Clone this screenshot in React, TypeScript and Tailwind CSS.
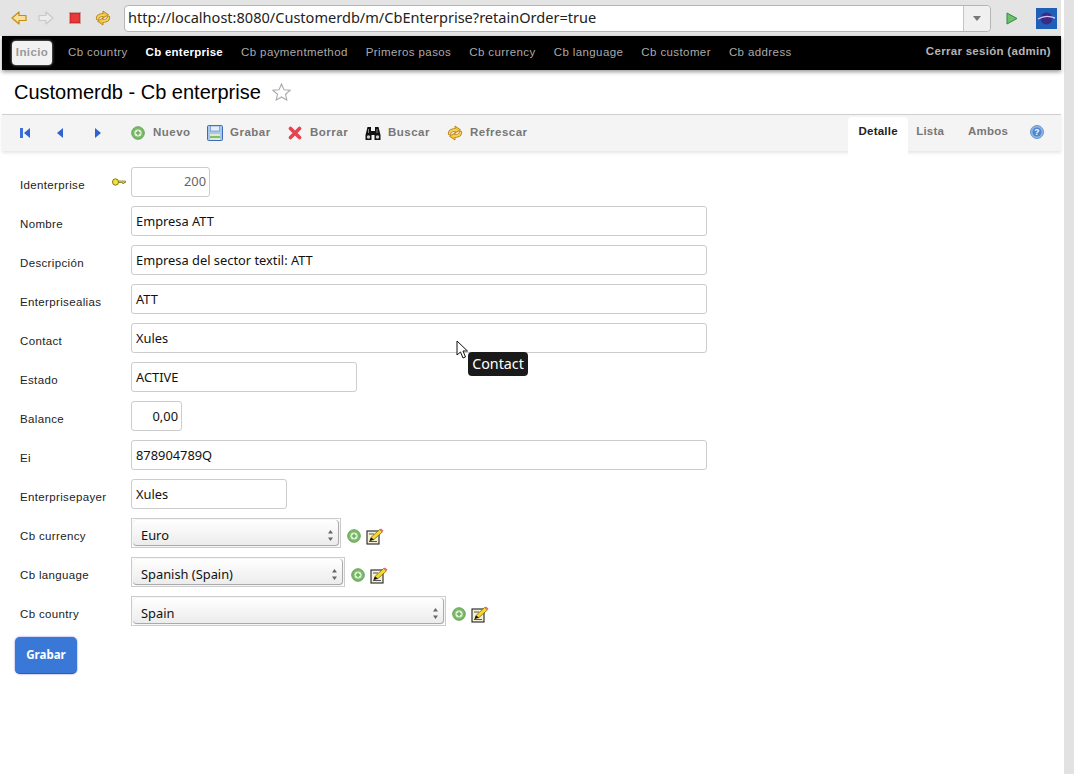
import React from "react";

const NAV = ["Cb country", "Cb enterprise", "Cb paymentmethod", "Primeros pasos", "Cb currency", "Cb language", "Cb customer", "Cb address"];

const RefreshIcon = () => (
    <svg width="16" height="16" viewBox="0 0 16 16">
        <g fill="none" strokeLinecap="round">
            <path d="M2.5 8.5 Q3 5 8 5" stroke="#b57f12" strokeWidth="3.4" />
            <path d="M13.5 7.5 Q13 11 8 11" stroke="#b57f12" strokeWidth="3.4" />
        </g>
        <path d="M8 1 L13.5 4.8 L8 8 Z" fill="#f3c33f" stroke="#b57f12" strokeWidth="0.9" strokeLinejoin="round" />
        <path d="M8 15 L2.5 11.2 L8 8 Z" fill="#f3c33f" stroke="#b57f12" strokeWidth="0.9" strokeLinejoin="round" />
        <g fill="none" strokeLinecap="round">
            <path d="M2.5 8.5 Q3 5 8.5 5" stroke="#f7d25a" strokeWidth="1.8" />
            <path d="M13.5 7.5 Q13 11 7.5 11" stroke="#f7d25a" strokeWidth="1.8" />
        </g>
    </svg>
);

const AddIcon = ({ size = 14 }: { size?: number }) => (
    <svg width={size} height={size} viewBox="0 0 14 14">
        <circle cx="7" cy="7" r="6.3" fill="#7dbb6a" stroke="#5c9c52" strokeWidth="0.9" />
        <circle cx="7" cy="7" r="3.6" fill="#e4f3dd" />
        <path d="M7 4.8 V9.2 M4.8 7 H9.2" stroke="#69ad5b" strokeWidth="1.5" />
    </svg>
);

const EditIcon = () => (
    <svg width="18" height="17" viewBox="0 0 18 17">
        <rect x="1" y="3" width="12" height="13" fill="#f5f1d8" stroke="#222" strokeWidth="1.1" />
        <path d="M3 6 H8 M3 13.5 H11" stroke="#555" strokeWidth="1" />
        <path d="M4 12.5 L5 9.5 L13.5 1.5 L16.5 3.8 L8 11.5 Z" fill="#f6d92e" stroke="#6b5a00" strokeWidth="0.7" />
        <path d="M13.5 1.5 L15 0.5 L17.5 2.8 L16.5 3.8 Z" fill="#e2697a" />
        <path d="M3.5 13 L5 9.5 L8 11.5 Z" fill="#111" />
    </svg>
);

function Field({ label, value, width, right, keyIcon }: { label: string; value: string; width: string; right?: boolean; keyIcon?: boolean }) {
    return (
        <div className="flex h-[30px] mb-[9px]">
            <div className="w-[111px] flex justify-between pt-[11px] text-[11.5px] tracking-[0.35px] leading-[14px] text-[#222]">
                <span>{label}</span>
                {keyIcon && (
                    <svg className="mt-[-1px] mr-[5px]" width="14" height="10" viewBox="0 0 14 10">
                        <ellipse cx="3.5" cy="5" rx="3" ry="3.2" fill="#f2e23a" stroke="#7a6a00" strokeWidth="0.9" />
                        <path d="M6.5 4 H13.5 V5.5 H12 V6.5 H10.5 V5.5 H6.5 Z" fill="#f2e23a" stroke="#7a6a00" strokeWidth="0.7" />
                    </svg>
                )}
            </div>
            <input
                readOnly
                value={value}
                className={`${width} h-[30px] border border-[#cccccc] rounded-[3px] bg-white px-1 outline-none text-[12.85px] font-['Noto_Sans',sans-serif] ${right ? "text-right pr-[3px]" : ""} ${keyIcon ? "text-[#666] pb-[2px] pr-[3px]" : "text-[#111]"}`}
            />
        </div>
    );
}

function SelectField({ label, value, width }: { label: string; value: string; width: string }) {
    return (
        <div className="flex h-[30px] mb-[9px]">
            <div className="w-[111px] pt-[11px] text-[11.5px] tracking-[0.35px] leading-[14px] text-[#222]">{label}</div>
            <div className={`${width} h-[30px] border border-[#cccccc] p-px`}>
                <div className="h-full rounded-[4px] border-b border-r border-[#aaaaaa] shadow-[0_0_1px_#999] bg-gradient-to-b from-white to-[#ececec] flex items-center justify-between pl-[8px] pr-[4px] pt-[6px]">
                    <span className="text-[12.85px] font-['Noto_Sans',sans-serif] text-[#111]">{value}</span>
                    <svg width="7" height="13" viewBox="0 0 7 13">
                        <path d="M3.5 1 L6 4.5 H1 Z M3.5 12 L6 8.5 H1 Z" fill="#666" />
                    </svg>
                </div>
            </div>
            <div className="flex items-center gap-[5px] ml-[6px] pt-[6px]">
                <AddIcon />
                <EditIcon />
            </div>
        </div>
    );
}

function ToolButton({ icon, label, width }: { icon: React.ReactNode; label: string; width: string }) {
    return (
        <div className={`${width} flex items-center`}>
            <div className="w-[16px] flex justify-center mr-[7px]">{icon}</div>
            <span className="font-bold text-[11.5px] tracking-[0.5px] text-[#777]">{label}</span>
        </div>
    );
}

export default function App() {
    return (
        <div className="relative h-[774px] w-[1074px] overflow-hidden bg-white flex font-['Liberation_Sans',Arial,sans-serif]">
            <div className="w-[2px] bg-[#e4e4e4] h-[36px]" />
            <div className="w-[1059px] flex flex-col">
                {/* browser bar */}
                <div className="h-[36px] bg-[#e4e4e4] flex items-center">
                    <div className="w-[122px] flex items-center pl-[9px] gap-[11px]">
                        <svg width="16" height="14" viewBox="0 0 16 14">
                            <path d="M1 7 L8 1 V4.5 H15 V9.5 H8 V13 Z" fill="#f7e19a" stroke="#c58c10" strokeWidth="1.2" strokeLinejoin="round" />
                        </svg>
                        <svg width="16" height="14" viewBox="0 0 16 14">
                            <path d="M15 7 L8 1 V4.5 H1 V9.5 H8 V13 Z" fill="#ececec" stroke="#c9c9c9" strokeWidth="1.2" strokeLinejoin="round" />
                        </svg>
                        <div className="ml-[4px] w-[12px] h-[12px] bg-[#e83a3a] border border-[#c9a0a0] shadow-[inset_0_0_2px_#a00]" />
                        <div className="ml-[3px]"><RefreshIcon /></div>
                    </div>
                    <div className="w-[867px] h-[27px] bg-white border border-[#b5b5b5] rounded-[4px] flex items-center">
                        <span className="flex-1 pl-[3px] text-[14.55px] text-[#222] font-['Noto_Sans',sans-serif] whitespace-nowrap">http://localhost:8080/Customerdb/m/CbEnterprise?retainOrder=true</span>
                        <div className="w-[27px] h-full border-l border-[#c4c4c4] bg-[#f0f0f0] rounded-r-[4px] flex items-center justify-center">
                            <svg width="8" height="5" viewBox="0 0 8 5"><path d="M0 0 H8 L4 5 Z" fill="#777" /></svg>
                        </div>
                    </div>
                    <svg className="ml-[15px]" width="12" height="13" viewBox="0 0 12 13">
                        <path d="M1 1 L11 6.5 L1 12 Z" fill="#6fc26a" stroke="#2f8a4a" strokeWidth="1" />
                    </svg>
                    <svg className="ml-[18px]" width="21" height="21" viewBox="0 0 21 21">
                        <rect width="21" height="21" fill="#1f5fb8" />
                        <circle cx="10.5" cy="10.5" r="6" fill="#3b2a86" />
                        <path d="M2 11 C7 8 14 8 19 10" stroke="#d9c3f2" strokeWidth="1.4" fill="none" />
                    </svg>
                </div>

                {/* menu */}
                <div className="h-[34px] bg-black flex items-center shadow-[0_2px_4px_rgba(0,0,0,0.4)] pl-[10px] pr-[10px] text-[11.5px] tracking-[0.4px] relative">
                    <div className="w-[40px] h-[24px] bg-[#f2f2f2] rounded-[4px] shadow-[0_0_3px_#aaa] flex items-center justify-center font-bold text-[#999] mr-[16px]">Inicio</div>
                    <div className="flex gap-[18px] text-[#aaaaaa]">
                        {NAV.map((n) => (
                            <span key={n} className={n === "Cb enterprise" ? "font-bold text-white tracking-[0.25px]" : ""}>{n}</span>
                        ))}
                    </div>
                    <span className="ml-auto font-bold text-[#b5b5b5] mb-[2px] tracking-[0.3px]">Cerrar sesión (admin)</span>
                </div>

                {/* title */}
                <div className="h-[44px] flex items-center pl-[12px] pb-[1px]">
                    <h1 className="text-[20px] text-black">Customerdb - Cb enterprise</h1>
                    <svg className="ml-[11px]" width="19" height="18" viewBox="0 0 19 18">
                        <path d="M9.5 1 L12 6.7 L18 7.3 L13.5 11.3 L14.8 17 L9.5 14 L4.2 17 L5.5 11.3 L1 7.3 L7 6.7 Z" fill="white" stroke="#aaa" strokeWidth="1.1" />
                    </svg>
                </div>

                {/* toolbar */}
                <div className="h-[37px] bg-[#f4f4f4] border-t border-[#cfcfcf] shadow-[0_2px_3px_rgba(0,0,0,0.1)] flex items-center pl-[18px] relative">
                    <div className="w-[110px] flex items-center">
                        <svg className="w-[37px]" width="37" height="12" viewBox="0 0 37 12">
                            <rect x="0" y="1" width="3" height="10" fill="#3f6fd8" />
                            <path d="M10 1 L4 6 L10 11 Z" fill="#2f63d0" />
                        </svg>
                        <svg className="w-[37px]" width="37" height="12" viewBox="0 0 37 12">
                            <path d="M6 1 L0 6 L6 11 Z" fill="#2f63d0" />
                        </svg>
                        <svg width="8" height="12" viewBox="0 0 8 12">
                            <path d="M1 1 L7 6 L1 11 Z" fill="#2f63d0" />
                        </svg>
                    </div>
                    <ToolButton width="w-[77px]" label="Nuevo" icon={<AddIcon />} />
                    <ToolButton width="w-[80px]" label="Grabar" icon={
                        <svg width="16" height="16" viewBox="0 0 16 16">
                            <rect x="0.5" y="0.5" width="15" height="15" rx="1" fill="#a9c6ec" stroke="#3c6db4" />
                            <rect x="3.5" y="1" width="9" height="5" fill="#e6eef9" stroke="#5b87c6" strokeWidth="0.6" />
                            <rect x="3" y="9" width="10" height="6" fill="#dfe9d3" />
                            <rect x="3" y="11" width="10" height="2" fill="#7fbf6a" />
                        </svg>
                    } />
                    <ToolButton width="w-[78px]" label="Borrar" icon={
                        <svg width="14" height="14" viewBox="0 0 14 14">
                            <path d="M2.5 2.5 L11.5 11.5 M11.5 2.5 L2.5 11.5" stroke="#e8414f" strokeWidth="3.6" strokeLinecap="round" />
                        </svg>
                    } />
                    <ToolButton width="w-[82px]" label="Buscar" icon={
                        <svg width="16" height="15" viewBox="0 0 16 15">
                            <path d="M2.5 1 H6 V5 H10 V1 H13.5 L15.5 9 V14 H9.5 V9 H6.5 V14 H0.5 V9 Z" fill="#111" />
                            <circle cx="3.5" cy="11" r="1.7" fill="#cfcfcf" />
                            <circle cx="12.5" cy="11" r="1.7" fill="#cfcfcf" />
                            <path d="M3.5 3 V7 M12 3 V7" stroke="#888" strokeWidth="1" />
                        </svg>
                    } />
                    <ToolButton width="w-[80px]" label="Refrescar" icon={<RefreshIcon />} />

                    <div className="ml-auto flex items-start h-full font-bold text-[11.5px] tracking-[0.2px] text-[#777] pr-[17px]">
                        <div className="w-[60px] h-[38px] mt-[2px] bg-white rounded-t-[4px] text-[#222] text-center pt-[6px]">Detalle</div>
                        <span className="ml-[8px] mt-[8px]">Lista</span>
                        <span className="ml-[24px] mt-[8px]">Ambos</span>
                        <svg className="ml-[22px] mt-[10px]" width="14" height="14" viewBox="0 0 14 14">
                            <circle cx="7" cy="7" r="6.5" fill="#8fb5e2" stroke="#6f97cc" />
                            <circle cx="7" cy="7" r="4.5" fill="#4f86cf" />
                            <text x="7" y="10" textAnchor="middle" fontSize="8.5" fontWeight="700" fill="white">?</text>
                        </svg>
                    </div>
                </div>

                {/* form */}
                <div className="pt-[16px] pl-[18px]">
                    <Field label="Identerprise" value="200" width="w-[79px]" right keyIcon />
                    <Field label="Nombre" value="Empresa ATT" width="w-[576px]" />
                    <Field label="Descripción" value="Empresa del sector textil: ATT" width="w-[576px]" />
                    <Field label="Enterprisealias" value="ATT" width="w-[576px]" />
                    <Field label="Contact" value="Xules" width="w-[576px]" />
                    <Field label="Estado" value="ACTIVE" width="w-[226px]" />
                    <Field label="Balance" value="0,00" width="w-[51px]" right />
                    <Field label="Ei" value="878904789Q" width="w-[576px]" />
                    <Field label="Enterprisepayer" value="Xules" width="w-[156px]" />
                    <SelectField label="Cb currency" value="Euro" width="w-[210px]" />
                    <SelectField label="Cb language" value="Spanish (Spain)" width="w-[214px]" />
                    <SelectField label="Cb country" value="Spain" width="w-[315px]" />
                    <button className="ml-[-5px] mt-[2px] w-[62px] h-[37px] rounded-[5px] bg-[#3a78d8] border-b border-[#2a5fb5] shadow-[0_0_2px_#6a6ae0] text-white font-bold text-[11.5px] font-['Noto_Sans',sans-serif]">Grabar</button>
                </div>
            </div>

            {/* scrollbar */}
            <div className="w-[3px]" />
            <div className="w-[10px] bg-[#e2e2e2]" />

            <svg className="absolute left-[456px] top-[340px]" width="13" height="20" viewBox="0 0 13 20">
                <path d="M1 1 V15 L4.5 12 L7 18 L9.5 17 L7 11 H11.5 Z" fill="white" stroke="#111" strokeWidth="1" strokeLinejoin="round" />
            </svg>
            <div className="absolute left-[468px] top-[352px] w-[60px] h-[24px] bg-[#1a1a1a] rounded-[4px] flex items-center justify-center pb-px text-white text-[14.3px] font-['Noto_Sans',sans-serif]">Contact</div>
        </div>
    );
}
